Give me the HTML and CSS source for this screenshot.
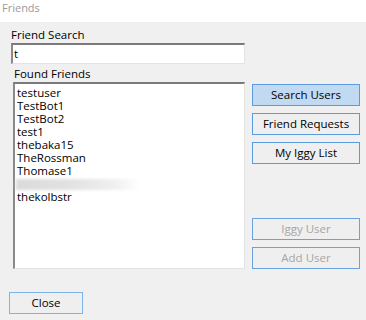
FILE: index.html
```html
<!DOCTYPE html>
<html>
<head>
<meta charset="utf-8">
<link rel="stylesheet" href="styles.css">
</head>
<body>
<div class="window">
  <div class="titlebar">Friends</div>
  <div class="main">
    <div class="left">
      <div class="label">Friend Search</div>
      <div class="input">t</div>
      <div class="label label-found">Found Friends</div>
      <div class="listbox">
        <div class="item">testuser</div>
        <div class="item">TestBot1</div>
        <div class="item">TestBot2</div>
        <div class="item">test1</div>
        <div class="item">thebaka15</div>
        <div class="item">TheRossman</div>
        <div class="item">Thomase1</div>
        <div class="item"><span class="blur"></span></div>
        <div class="item">thekolbstr</div>
      </div>
    </div>
    <div class="right">
      <div class="btn btn-primary">Search Users</div>
      <div class="btn">Friend Requests</div>
      <div class="btn">My Iggy List</div>
      <div class="btn btn-disabled btn-lower">Iggy User</div>
      <div class="btn btn-disabled">Add User</div>
    </div>
  </div>
  <div class="footer">
    <div class="btn btn-close">Close</div>
  </div>
</div>
</body>
</html>
```

FILE: styles.css
```css
html, body {
  margin: 0;
  padding: 0;
  background: #f0f0f0;
}
.window {
  width: 366px;
  height: 320px;
  background: #f0f0f0;
  font-family: "Open Sans", "Noto Sans", sans-serif;
  font-size: 11.5px;
  color: #000;
}
.titlebar {
  height: 22px;
  background: #ffffff;
  color: #9a9a9a;
  padding-left: 2px;
  line-height: 15px;
  font-size: 11px;
  box-sizing: border-box;
}
.main {
  display: flex;
  padding-left: 11px;
}
.left {
  width: 234px;
  display: flex;
  flex-direction: column;
}
.label {
  height: 16px;
  line-height: 15px;
  margin-top: 5px;
}
.label-found {
  margin-top: 2px;
  padding-left: 3px;
}
.input {
  height: 21px;
  box-sizing: border-box;
  background: #fff;
  border-top: 2px solid #7a7a7a;
  border-left: 2px solid #8a8a8a;
  border-right: 1px solid #e3e3e3;
  border-bottom: 1px solid #e3e3e3;
  padding-left: 1px;
  line-height: 17px;
}
.listbox {
  margin-left: 2px;
  height: 187px;
  box-sizing: border-box;
  background: #fff;
  border-top: 2px solid #7a7a7a;
  border-left: 2px solid #8a8a8a;
  border-right: 1px solid #e3e3e3;
  border-bottom: 1px solid #e3e3e3;
  padding: 2px 0 0 2px;
}
.item {
  height: 13px;
  line-height: 13px;
  white-space: nowrap;
}
.blur {
  display: inline-block;
  width: 124px;
  height: 11px;
  margin-top: 2px;
  margin-left: -1px;
  background: linear-gradient(90deg, #dadada 0%, #e2e2e2 45%, #f0f0f0 80%, #ffffff 100%);
  filter: blur(1.5px);
}
.right {
  margin-left: 7px;
  padding-top: 62px;
  display: flex;
  flex-direction: column;
  gap: 7px;
}
.btn {
  width: 108px;
  height: 22px;
  box-sizing: border-box;
  border: 1px solid #5a9be0;
  background: #efefef;
  text-align: center;
  line-height: 20px;
}
.btn-primary {
  background: #c2daf1;
  border-color: #5d9be0;
}
.btn-disabled {
  color: #a6a6a6;
  border-color: #6aa2dd;
}
.btn-lower {
  margin-top: 47px;
}
.footer {
  padding: 23px 0 0 9px;
}
.btn-close {
  width: 74px;
  border-color: #7db3e8;
}
```
